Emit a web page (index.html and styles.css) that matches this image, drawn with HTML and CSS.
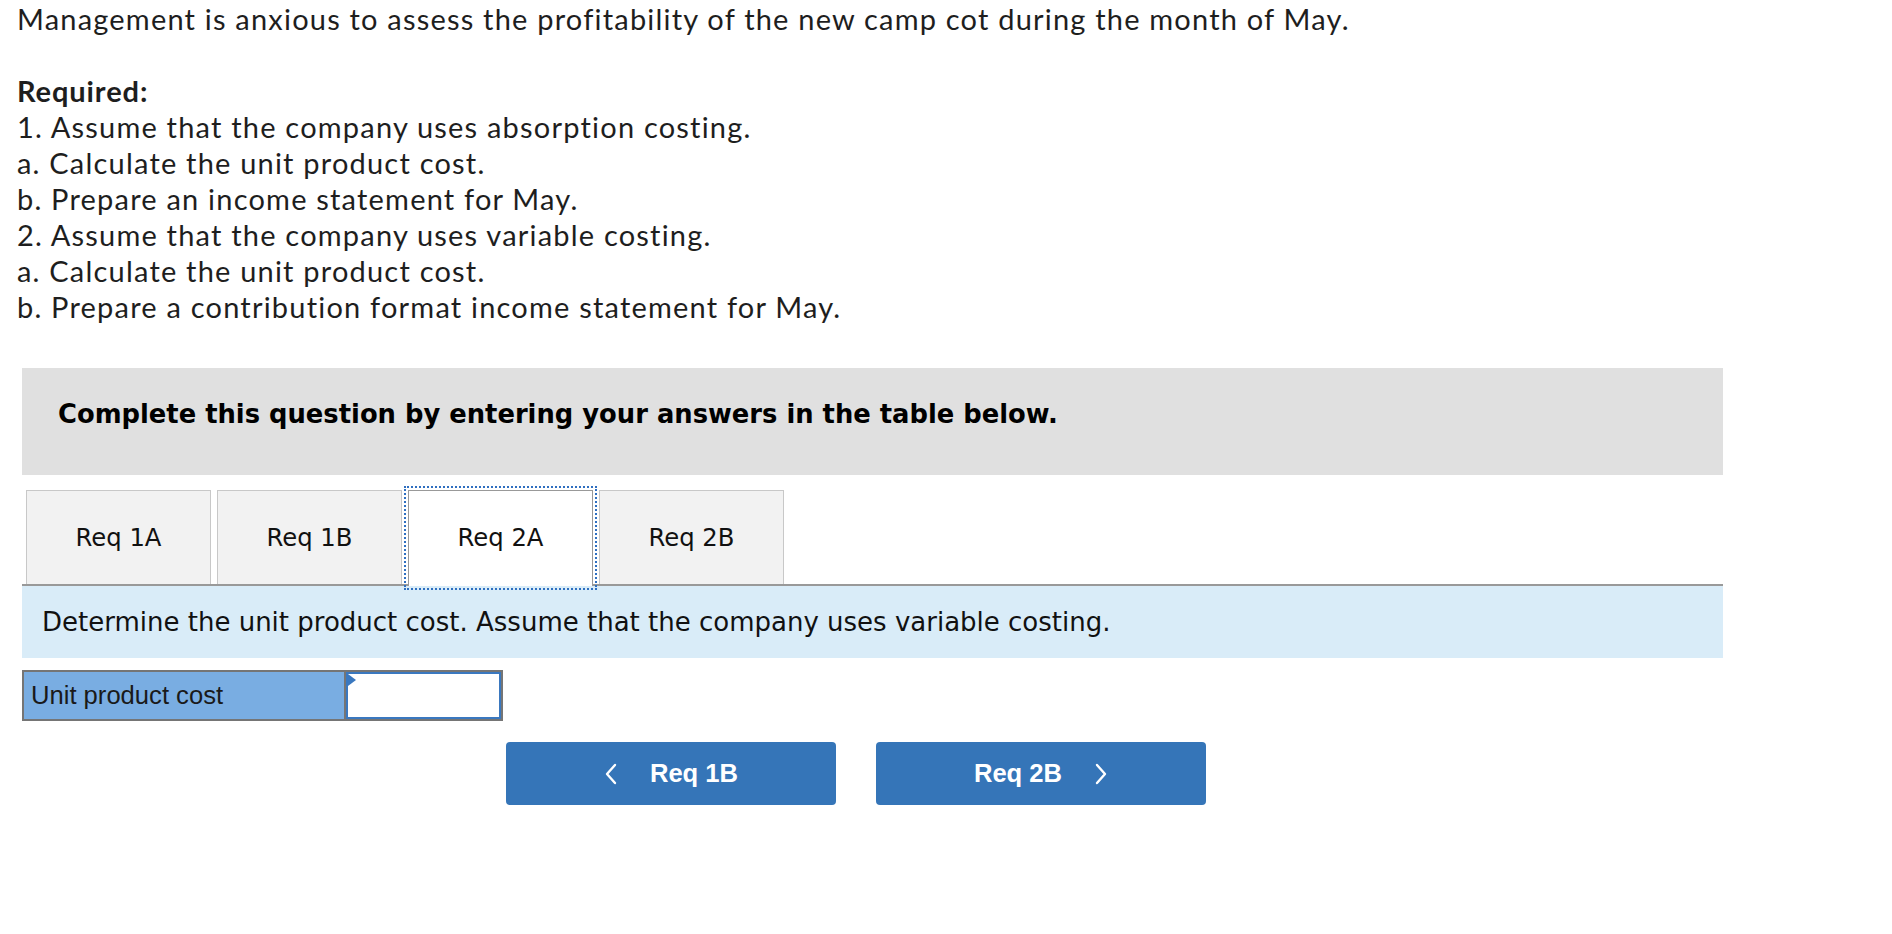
FILE: index.html
```html
<!DOCTYPE html>
<html>
<head>
<meta charset="utf-8">
<title>Req 2A</title>
<link rel="stylesheet" href="styles.css">
</head>
<body>
<div class="page">
  <div class="intro">
    <p class="line">Management is anxious to assess the profitability of the new camp cot during the month of May.</p>
    <p class="line">&nbsp;</p>
    <p class="line req">Required:</p>
    <p class="line">1. Assume that the company uses absorption costing.</p>
    <p class="line">a. Calculate the unit product cost.</p>
    <p class="line">b. Prepare an income statement for May.</p>
    <p class="line">2. Assume that the company uses variable costing.</p>
    <p class="line">a. Calculate the unit product cost.</p>
    <p class="line">b. Prepare a contribution format income statement for May.</p>
  </div>
  <div class="panel">
    <div class="banner">Complete this question by entering your answers in the table below.</div>
    <div class="tabs">
      <div class="tab">Req 1A</div>
      <div class="tab">Req 1B</div>
      <div class="tab active">Req 2A</div>
      <div class="tab">Req 2B</div>
    </div>
    <div class="info">Determine the unit product cost. Assume that the company uses variable costing.</div>
    <div class="grid">
      <div class="label">Unit product cost</div>
      <div class="input"><span class="flag"></span></div>
    </div>
    <div class="nav">
      <button class="btn"><svg class="chev" width="14" height="22" viewBox="0 0 14 22"><path d="M11 2 L3 11 L11 20" fill="none" stroke="#fff" stroke-width="2.4" stroke-linecap="round" stroke-linejoin="round"/></svg><span>Req 1B</span></button>
      <button class="btn"><span>Req 2B</span><svg class="chev" width="14" height="22" viewBox="0 0 14 22"><path d="M3 2 L11 11 L3 20" fill="none" stroke="#fff" stroke-width="2.4" stroke-linecap="round" stroke-linejoin="round"/></svg></button>
    </div>
  </div>
</div>
</body>
</html>
```
FILE: styles.css
```css
html, body { margin: 0; padding: 0; background: #fff; }
body { color: #1e1e1e; }
.page { width: 1892px; }
.intro { padding: 1px 0 0 17px; font-family: Lato, "Open Sans", sans-serif; font-size: 29px; letter-spacing: 1.2px; line-height: 36px; color: #1e1e1e; }
.line { margin: 0; white-space: nowrap; }
.req { font-weight: bold; letter-spacing: 0.9px; }
.panel { margin: 43px 0 0 22px; width: 1701px; }
.banner { height: 107px; box-sizing: border-box; background: #e0e0e0; padding: 24px 0 0 36px; font-family: "DejaVu Sans", Verdana, sans-serif; font-weight: bold; font-size: 25.8px; line-height: 44px; color: #000; }
.tabs { display: flex; align-items: flex-end; margin-top: 15px; padding-left: 4px; border-bottom: 2px solid #999; height: 94px; }
.tab { width: 185px; height: 94px; box-sizing: border-box; margin-right: 6px; background: #f2f2f2; border: 1px solid #c8c8c8; border-bottom: none; display: flex; align-items: center; justify-content: center; font-family: "DejaVu Sans", Verdana, sans-serif; font-size: 24.3px; color: #111; }
.tab.active { background: #fff; border: 1px solid #999; border-bottom: none; height: 96px; margin-bottom: -2px; outline: 2px dotted #2f6fc0; outline-offset: 2px; position: relative; padding-bottom: 2px; }
.info { height: 72px; background: #d9ecf8; display: flex; align-items: center; padding-left: 20px; font-family: "DejaVu Sans", Verdana, sans-serif; font-size: 26px; color: #111; }
.grid { margin-top: 12px; display: flex; width: 481px; height: 51px; box-sizing: border-box; border: 2px solid #757575; }
.label { width: 322px; box-sizing: border-box; background: #79ade2; border-right: 2px solid #757575; display: flex; align-items: center; padding-left: 7px; font-family: "Liberation Sans", Arial, sans-serif; font-size: 25.6px; color: #1a1a1a; }
.input { flex: 1; background: #fff; border: 2px solid #3a78bf; position: relative; }
.flag { position: absolute; left: 0; top: 0; width: 0; height: 0; border-top: 6px solid transparent; border-bottom: 6px solid transparent; border-left: 8px solid #3a78bf; }
.nav { display: flex; gap: 40px; margin: 21px 0 0 484px; }
.btn { width: 330px; height: 63px; border: none; border-radius: 4px; background: #3575b8; color: #fff; display: flex; align-items: center; justify-content: center; gap: 32px; font-family: "Liberation Sans", Arial, sans-serif; font-weight: bold; font-size: 25.6px; padding: 0; }
.chev { display: block; }
```
